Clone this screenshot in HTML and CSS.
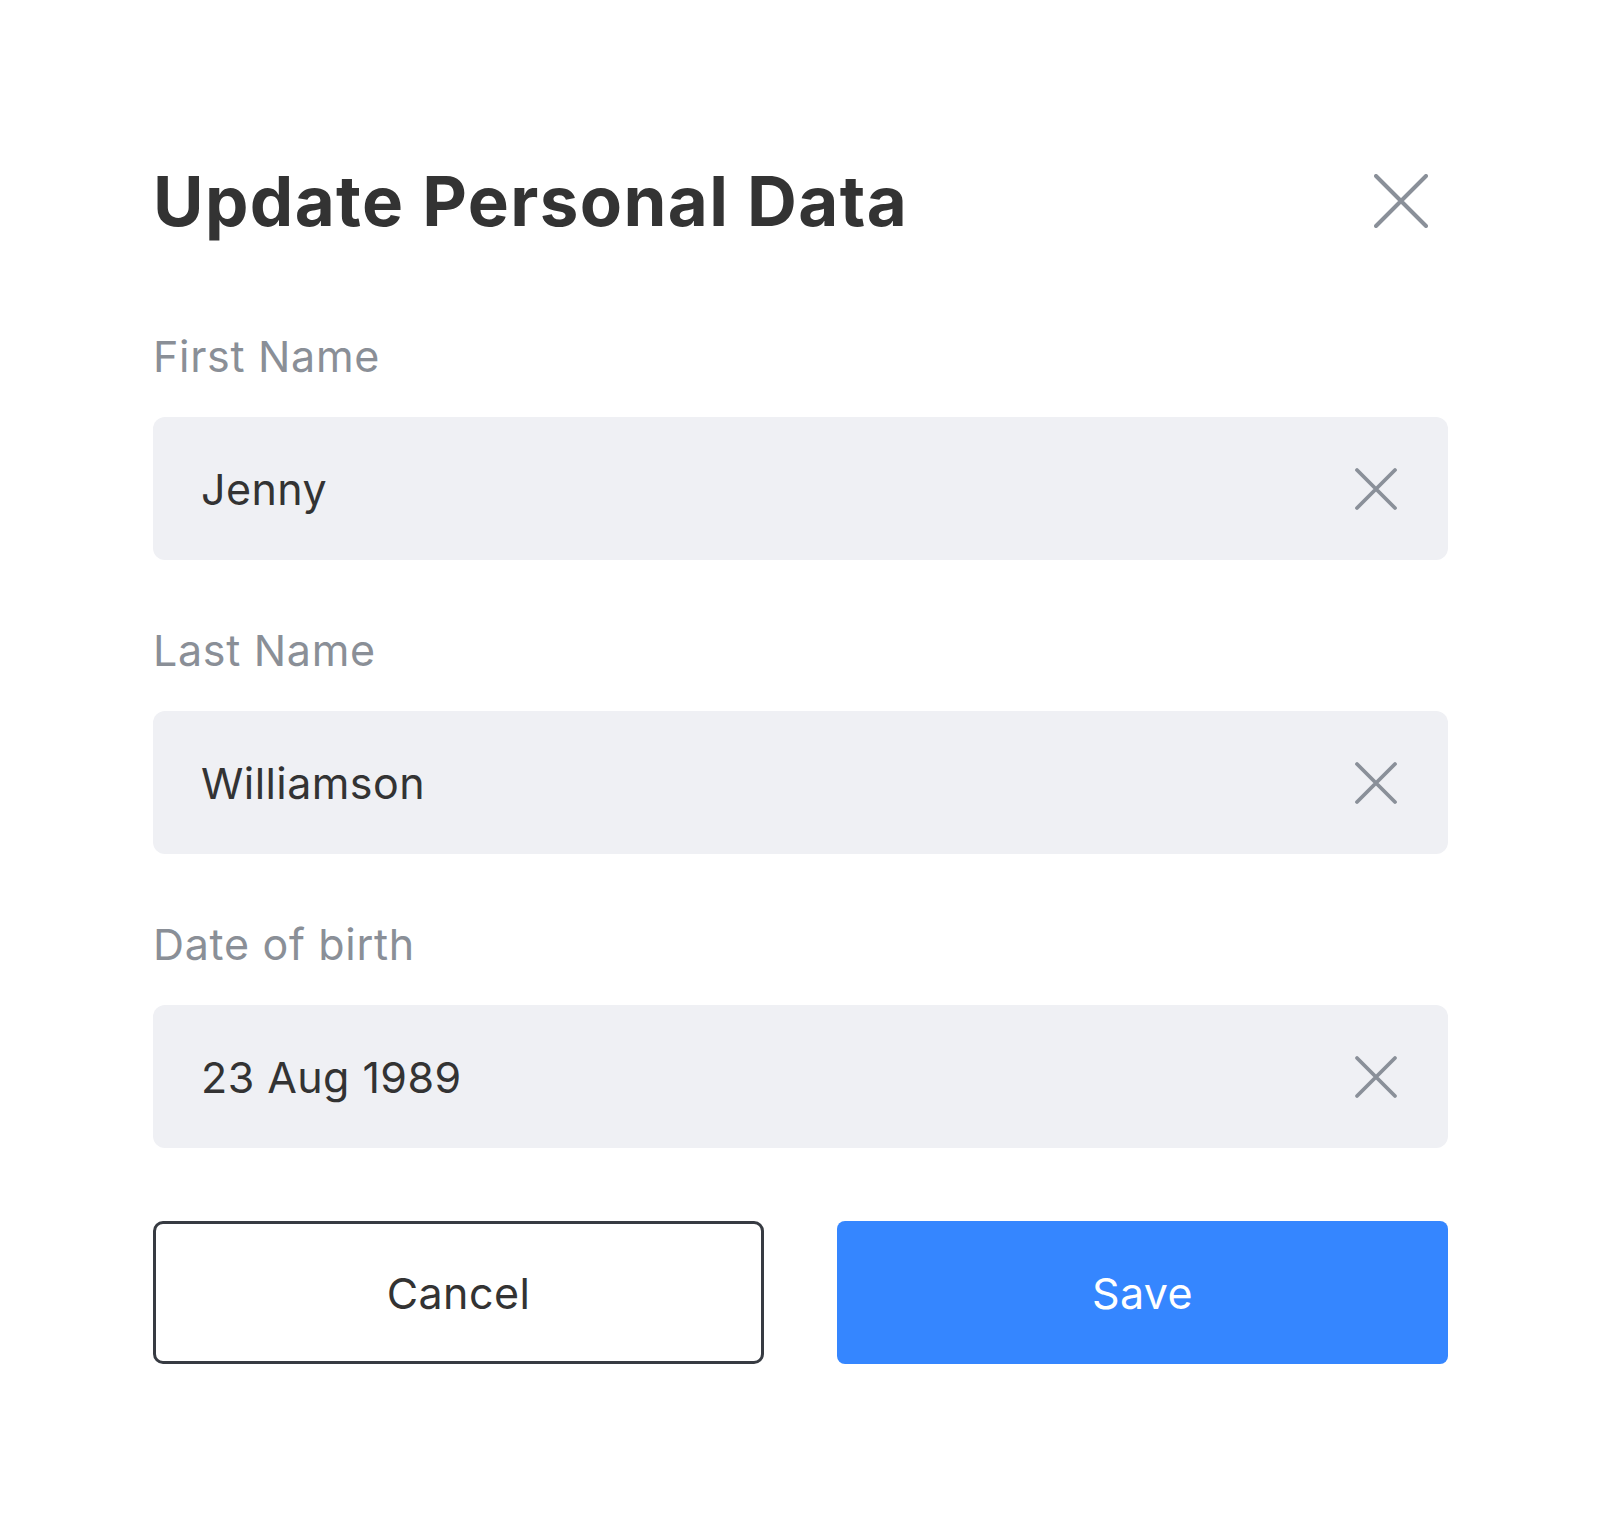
FILE: index.html
```html
<!DOCTYPE html>
<html lang="en">
<head>
<meta charset="utf-8">
<title>Update Personal Data</title>
<link rel="stylesheet" href="styles.css">
</head>
<body>
<main class="dialog">
  <header class="dialog-header">
    <h1 class="dialog-title">Update Personal Data</h1>
    <button class="close-btn" type="button" aria-label="Close">
      <svg viewBox="0 0 54 54" width="54" height="54"><path d="M2 2 L52 52 M52 2 L2 52" fill="none" stroke="#8a9099" stroke-width="4" stroke-linecap="round"/></svg>
    </button>
  </header>

  <div class="field">
    <label class="field-label">First Name</label>
    <div class="field-box">
      <span class="field-value">Jenny</span>
      <span class="clear-icon"><svg viewBox="0 0 44 44" width="44" height="44"><path d="M3 3 L41 41 M41 3 L3 41" fill="none" stroke="#8a9099" stroke-width="3.8" stroke-linecap="round"/></svg></span>
    </div>
  </div>

  <div class="field">
    <label class="field-label">Last Name</label>
    <div class="field-box">
      <span class="field-value">Williamson</span>
      <span class="clear-icon"><svg viewBox="0 0 44 44" width="44" height="44"><path d="M3 3 L41 41 M41 3 L3 41" fill="none" stroke="#8a9099" stroke-width="3.8" stroke-linecap="round"/></svg></span>
    </div>
  </div>

  <div class="field">
    <label class="field-label">Date of birth</label>
    <div class="field-box">
      <span class="field-value">23 Aug 1989</span>
      <span class="clear-icon"><svg viewBox="0 0 44 44" width="44" height="44"><path d="M3 3 L41 41 M41 3 L3 41" fill="none" stroke="#8a9099" stroke-width="3.8" stroke-linecap="round"/></svg></span>
    </div>
  </div>

  <div class="actions">
    <button class="btn btn-cancel" type="button">Cancel</button>
    <button class="btn btn-save" type="button">Save</button>
  </div>
</main>
</body>
</html>
```

FILE: styles.css
```css
* { box-sizing: border-box; }

html, body {
  margin: 0;
  padding: 0;
  background: #ffffff;
}

body {
  font-family: Inter, "Noto Sans", "Liberation Sans", sans-serif;
  color: #333333;
}

.dialog {
  width: 1295px;
  margin: 0 0 0 153px;
  padding-top: 159px;
  display: flex;
  flex-direction: column;
}

.dialog-header {
  display: flex;
  align-items: center;
  justify-content: space-between;
  height: 84px;
  margin-bottom: 87px;
}

.dialog-title {
  margin: 0;
  font-size: 69px;
  line-height: 84px;
  font-weight: 700;
  letter-spacing: 0.02em;
  color: #333333;
}

.close-btn {
  border: none;
  background: none;
  padding: 0;
  margin-right: 20px;
  width: 54px;
  height: 54px;
  display: flex;
}

.field {
  display: flex;
  flex-direction: column;
  margin-bottom: 64px;
}

.field-label {
  font-size: 43px;
  line-height: 52px;
  letter-spacing: 0.016em;
  color: #8a8f97;
  margin-bottom: 35px;
}

.field-box {
  height: 143px;
  background: #eff0f4;
  border-radius: 12px;
  display: flex;
  align-items: center;
  justify-content: space-between;
  padding: 0 50px 0 48px;
}

.field-value {
  font-size: 43px;
  line-height: 52px;
  letter-spacing: 0.01em;
  color: #333333;
}

.clear-icon {
  display: flex;
  width: 44px;
  height: 44px;
}

.actions {
  display: grid;
  grid-template-columns: 1fr 1fr;
  gap: 73px;
  margin-top: 9px;
}

.btn {
  height: 143px;
  font-family: Inter, "Noto Sans", "Liberation Sans", sans-serif;
  font-size: 43px;
  letter-spacing: 0.01em;
  border-radius: 10px;
  cursor: pointer;
}

.btn-cancel {
  background: #ffffff;
  border: 3px solid #373b42;
  color: #333333;
}

.btn-save {
  background: #3586ff;
  border: none;
  color: #ffffff;
  border-radius: 8px;
}
```
